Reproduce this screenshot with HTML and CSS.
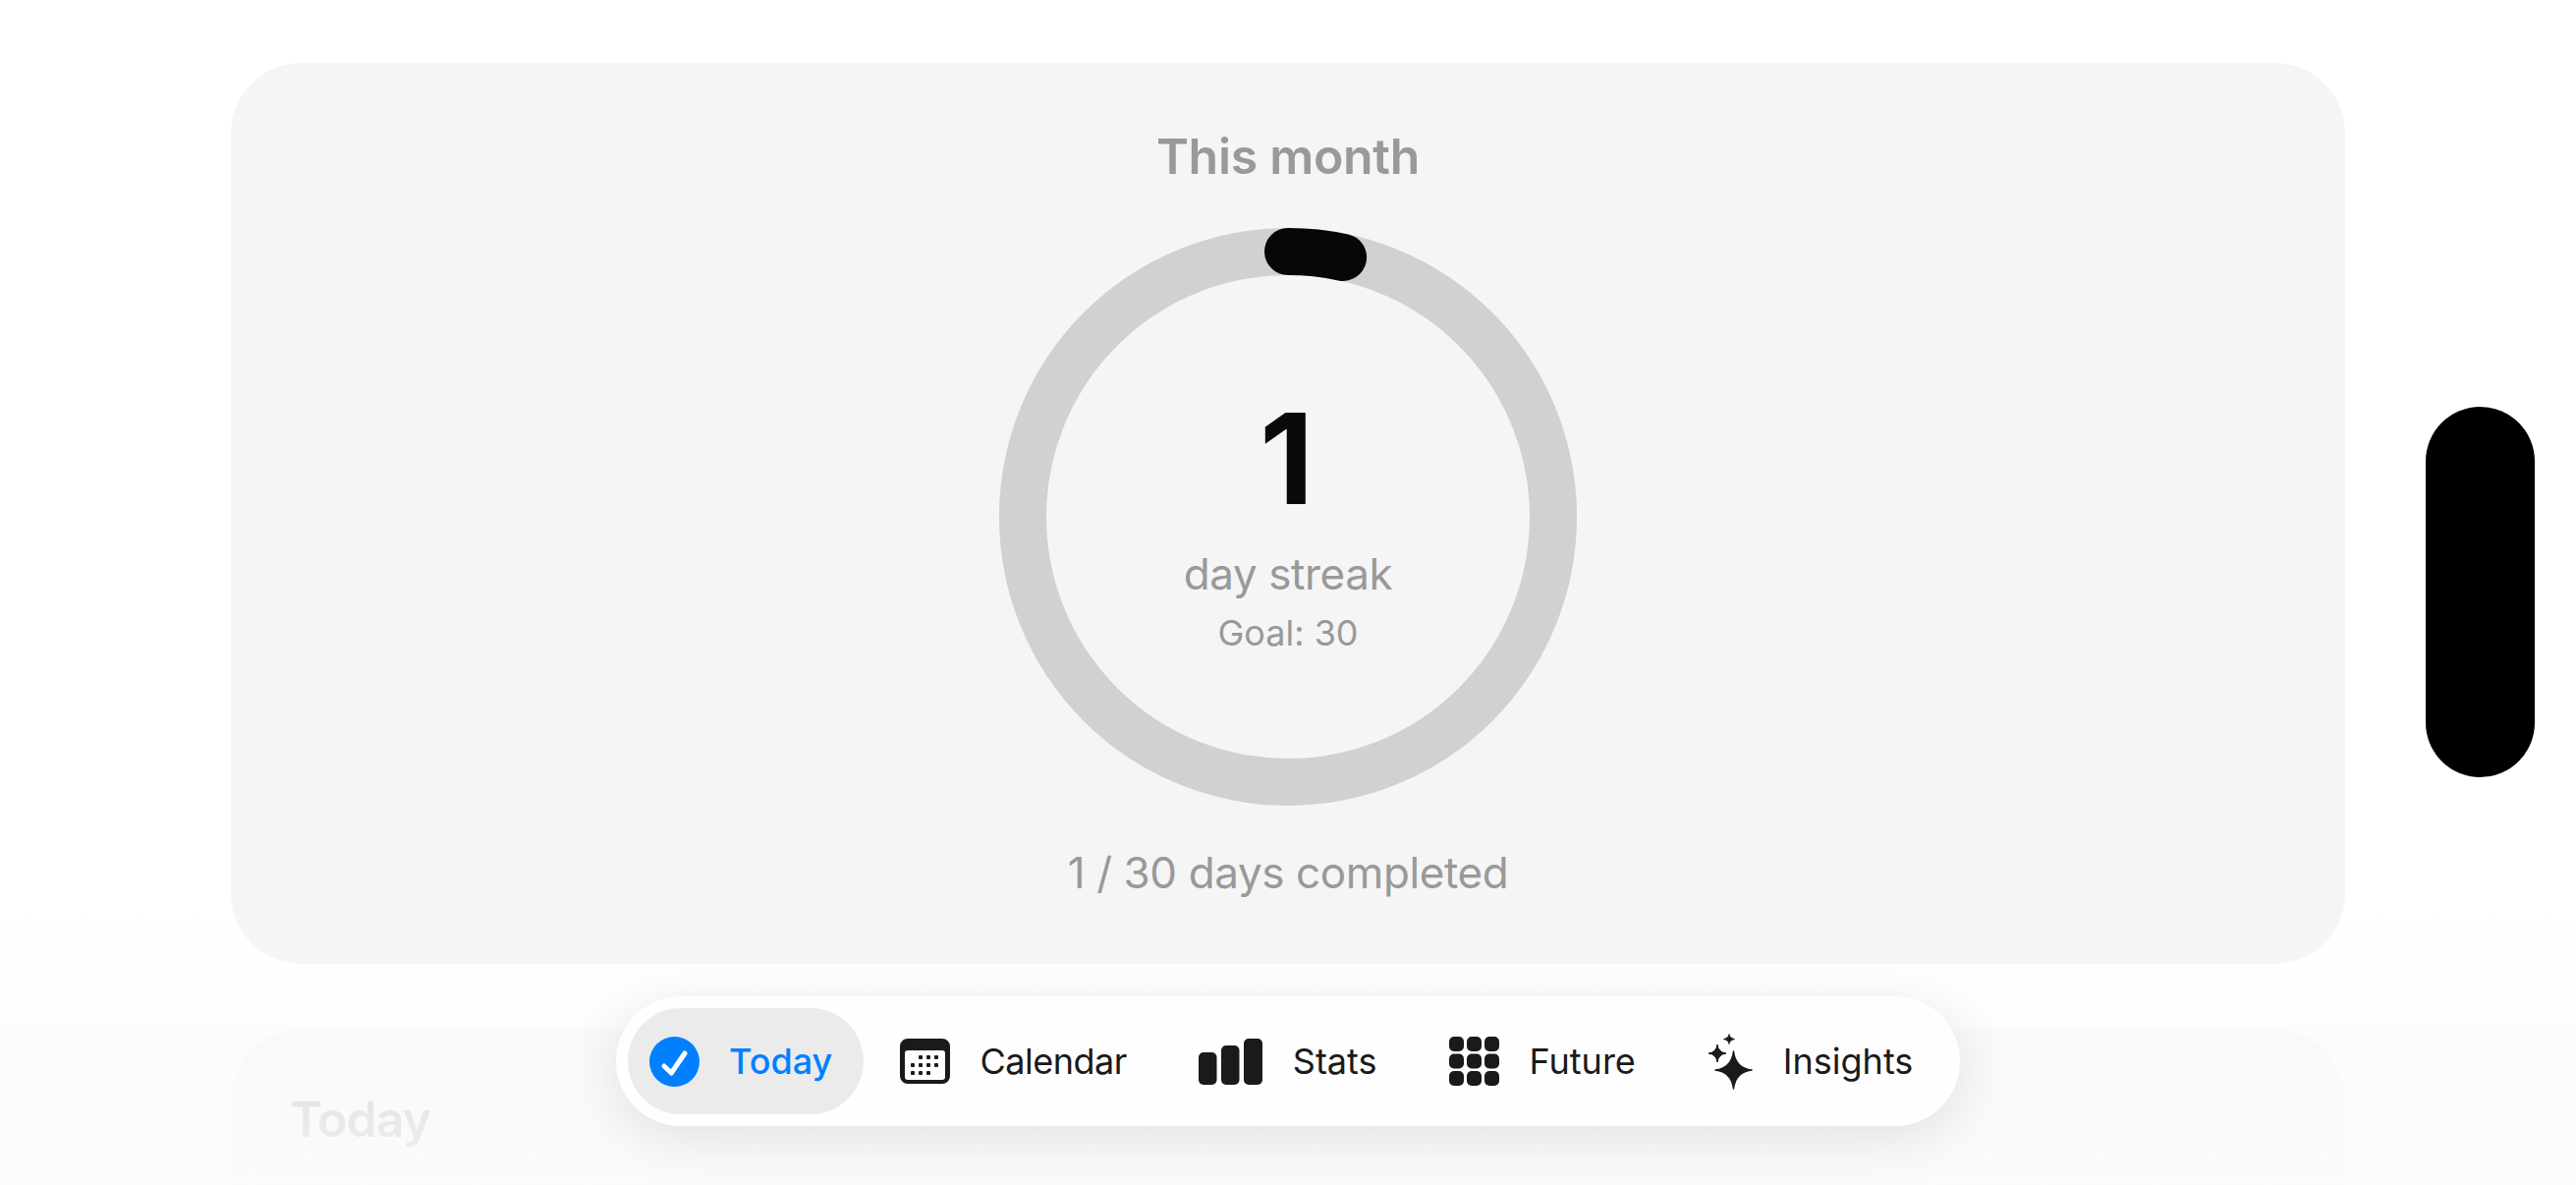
FILE: index.html
```html
<!DOCTYPE html>
<html lang="en">
<head>
  <meta charset="UTF-8" />
  <title>Streak</title>
  <link rel="stylesheet" href="styles.css">
</head>
<body>

  <main class="page">
    <!-- Month card -->
    <section class="card month-card">
      <h2 class="card-title">This month</h2>
      <div class="ring">
        <svg class="ring-svg" width="588" height="588" viewBox="0 0 588 588">
          <circle cx="294" cy="294" r="270" fill="none" stroke="#d1d1d1" stroke-width="48"/>
          <path d="M294 24 A270 270 0 0 1 350.1 29.9" fill="none" stroke="#070707" stroke-width="48" stroke-linecap="round"/>
        </svg>
        <div class="ring-text">
          <div class="streak-num">1</div>
          <div class="streak-label">day streak</div>
          <div class="streak-goal">Goal: 30</div>
        </div>
      </div>
      <p class="month-done">1 / 30 days completed</p>
    </section>

    <!-- Today card, mostly under the fade -->
    <section class="card today-card">
      <h2 class="card-title today-title">Today</h2>
    </section>
  </main>

  <div class="fade"></div>

  <!-- Bottom tab bar -->
  <nav class="tabbar">
    <a class="tab tab-active">
      <svg class="tab-icon" width="51" height="51" viewBox="0 0 51 51">
        <circle cx="25.5" cy="25.5" r="25.5" fill="#0080ff"/>
        <path d="M15 30 L22.3 37 L36 17" fill="none" stroke="#fff" stroke-width="5" stroke-linecap="round" stroke-linejoin="round"/>
      </svg>
      <span>Today</span>
    </a>
    <a class="tab tab-calendar">
      <svg class="tab-icon" width="51" height="46" viewBox="0 0 51 46">
        <path fill="#1a1a1a" fill-rule="evenodd" d="M8 0 H43 A8 8 0 0 1 51 8 V38 A8 8 0 0 1 43 46 H8 A8 8 0 0 1 0 38 V8 A8 8 0 0 1 8 0Z M8 12 A3 3 0 0 0 5 15 V39 A3 3 0 0 0 8 42 H43 A3 3 0 0 0 46 39 V15 A3 3 0 0 0 43 12Z"/>
        <g fill="#1a1a1a">
          <rect x="19" y="17" width="4" height="4" rx="1"/><rect x="27" y="17" width="4" height="4" rx="1"/><rect x="35" y="17" width="4" height="4" rx="1"/>
          <rect x="11" y="25" width="4" height="4" rx="1"/><rect x="19" y="25" width="4" height="4" rx="1"/><rect x="27" y="25" width="4" height="4" rx="1"/><rect x="35" y="25" width="4" height="4" rx="1"/>
          <rect x="11" y="33" width="4" height="4" rx="1"/><rect x="19" y="33" width="4" height="4" rx="1"/><rect x="27" y="33" width="4" height="4" rx="1"/>
        </g>
      </svg>
      <span>Calendar</span>
    </a>
    <a class="tab">
      <svg class="tab-icon" width="65" height="47" viewBox="0 0 65 47">
        <g fill="#1a1a1a">
          <rect x="0" y="14" width="18.5" height="33" rx="5"/>
          <rect x="23" y="7" width="18.5" height="40" rx="5"/>
          <rect x="46" y="0" width="19" height="47" rx="5"/>
        </g>
      </svg>
      <span>Stats</span>
    </a>
    <a class="tab">
      <svg class="tab-icon" width="51" height="50" viewBox="0 0 51 50">
        <g fill="#1a1a1a">
          <rect x="0" y="0" width="15" height="15" rx="5"/><rect x="18" y="0" width="15" height="15" rx="5"/><rect x="36" y="0" width="15" height="15" rx="5"/>
          <rect x="0" y="17.5" width="15" height="15" rx="5"/><rect x="18" y="17.5" width="15" height="15" rx="5"/><rect x="36" y="17.5" width="15" height="15" rx="5"/>
          <rect x="0" y="35" width="15" height="15" rx="5"/><rect x="18" y="35" width="15" height="15" rx="5"/><rect x="36" y="35" width="15" height="15" rx="5"/>
        </g>
      </svg>
      <span>Future</span>
    </a>
    <a class="tab">
      <svg class="tab-icon" width="46" height="57" viewBox="0 0 46 57">
        <g fill="#1a1a1a" stroke="#1a1a1a" stroke-linejoin="round">
          <path stroke-width="1.5" d="M26.5 18 Q28.5 35 45 37 Q28.5 39 26.5 56 Q24.5 39 8 37 Q24.5 35 26.5 18Z"/>
          <path stroke-width="1" d="M10 11 Q11 19 19 20 Q11 21 10 29 Q9 21 1 20 Q9 19 10 11Z"/>
          <path stroke-width="0.8" d="M22 0.5 Q22.6 4.4 27.5 5.5 Q22.6 6.6 22 10.5 Q21.4 6.6 16.5 5.5 Q21.4 4.4 22 0.5Z"/>
        </g>
      </svg>
      <span>Insights</span>
    </a>
  </nav>

  <!-- Camera cut-out on the right edge -->
  <div class="island"></div>

</body>
</html>
```
FILE: styles.css
```css
html, body {
  margin: 0;
  height: 100%;
}

body {
  position: relative;
  width: 2622px;
  height: 1206px;
  overflow: hidden;
  background: #fff;
  font-family: Inter, "Noto Sans", sans-serif;
  color: #999;
}

.page {
  padding: 64px 235px 0;
  display: flex;
  flex-direction: column;
  gap: 66px;
}

.card {
  background: #f5f5f5;
  border-radius: 72px;
}

.card-title {
  margin: 0;
  font-size: 50px;
  line-height: 60px;
  font-weight: 600;
  letter-spacing: -0.3px;
  color: #999;
}

.month-card {
  height: 917px;
  padding-top: 65px;
  box-sizing: border-box;
  display: flex;
  flex-direction: column;
  align-items: center;
}

.ring {
  display: grid;
  margin-top: 43px;
  width: 588px;
  height: 588px;
}

.ring-svg, .ring-text {
  grid-area: 1 / 1;
}

.ring-text {
  display: flex;
  flex-direction: column;
  align-items: center;
  padding-top: 170px;
}

.streak-num {
  margin-right: 3px;
  font-size: 128px;
  line-height: 130px;
  font-weight: 700;
  color: #0a0a0a;
}

.streak-label {
  margin-top: 25px;
  font-size: 44px;
  line-height: 54px;
  letter-spacing: -0.4px;
}

.streak-goal {
  margin-top: 11px;
  font-size: 36px;
  line-height: 44px;
}

.month-done {
  margin: 41px 0 0;
  font-size: 44px;
  line-height: 54px;
  letter-spacing: -0.4px;
}

.today-card {
  height: 159px;
  padding: 62px 60px 0;
  box-sizing: border-box;
  border-radius: 72px 72px 0 0;
}

.today-title {
  letter-spacing: -1px;
}

/* wash over the lower cards */
.fade {
  position: absolute;
  left: 0;
  right: 0;
  top: 920px;
  bottom: 0;
  background: linear-gradient(to bottom,
    rgba(251,251,251,0),
    rgba(251,251,251,0.15) 21%,
    rgba(251,251,251,0.7) 49%,
    rgba(251,251,251,0.9));
}

.tabbar {
  position: absolute;
  left: 627px;
  top: 1014px;
  width: 1368px;
  height: 132px;
  box-sizing: border-box;
  padding: 12px;
  display: flex;
  align-items: center;
  background: #fefefe;
  border-radius: 66px;
  box-shadow: 0 12px 56px rgba(0,0,0,0.1);
}

.tab {
  flex: none;
  height: 108px;
  padding: 0 36.5px;
  display: flex;
  align-items: center;
  gap: 31px;
  font-size: 36px;
  font-weight: 400;
  color: #1a1a1a;
}

.tab-calendar {
  letter-spacing: -0.5px;
}

.tab-active {
  box-sizing: border-box;
  width: 240px;
  padding: 0 0 0 22px;
  gap: 30px;
  background: #ebebeb;
  border-radius: 54px;
  color: #0080ff;
  font-weight: 500;
}

.tab-icon {
  flex: none;
}

.island {
  position: absolute;
  left: 2469px;
  top: 414px;
  width: 111px;
  height: 377px;
  background: #000;
  border-radius: 56px;
}
```
